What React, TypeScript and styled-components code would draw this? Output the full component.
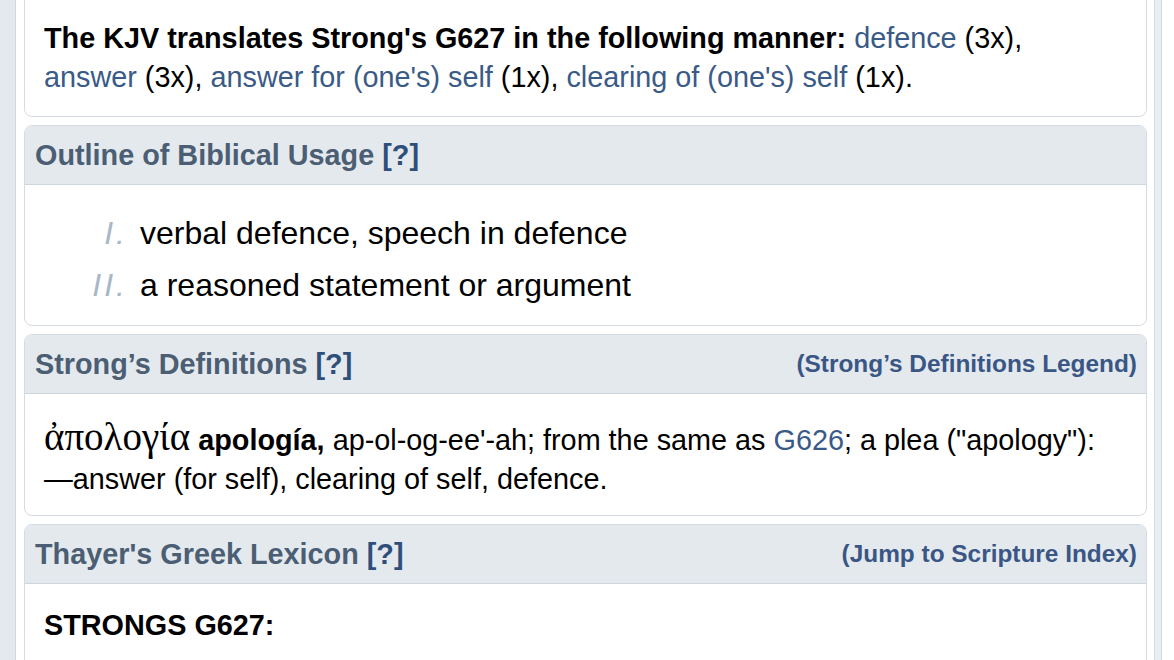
import React from "react";
import styled, { createGlobalStyle } from "styled-components";

const GlobalStyle = createGlobalStyle`
    html, body {
        margin: 0;
        padding: 0;
        background: #ffffff;
        overflow: hidden;
    }
    body {
        font-family: "Liberation Sans", Arial, sans-serif;
        color: #000;
    }
`;

const Page = styled.div`
    display: flex;
    width: 1174px;
    height: 660px;
    overflow: hidden;
`;

const LeftRail = styled.div`
    width: 15px;
    flex: none;
    background: #e4e9ef;
    border-right: 1px solid #cfd7df;
`;

const RightRail = styled.div`
    width: 6px;
    flex: none;
    margin-right: 12px;
    background: #e9eef3;
    border-left: 1px solid #d2dae2;
    border-right: 1px solid #d2dae2;
`;

const Main = styled.div`
    flex: 1;
    padding: 0 7px 0 8px;
    display: flex;
    flex-direction: column;
    gap: 8px;
`;

const Panel = styled.section<{ $top?: boolean }>`
    border: 1px solid #d4dbe3;
    border-radius: 8px;
    background: #fff;
    overflow: hidden;
    margin-top: ${p => (p.$top ? "-20px" : "0")};
    flex: none;
`;

const Header = styled.div`
    display: flex;
    align-items: center;
    justify-content: space-between;
    background: #e4e9ee;
    border-bottom: 1px solid #cdd5dd;
    padding: 13px 9px 13px 10px;
    line-height: 32px;
`;

const Title = styled.h2`
    margin: 0;
    font-size: 28.8px;
    font-weight: bold;
    color: #4b5e73;
`;

const Help = styled.a`
    color: #2f4f7b;
    text-decoration: none;
`;

const HeaderLink = styled.a`
    font-size: 24.4px;
    font-weight: bold;
    color: #3a5684;
    text-decoration: none;
`;

const Body = styled.div<{ $pt: number; $pb: number; $pr?: number }>`
    padding: ${p => p.$pt}px ${p => p.$pr ?? 19}px ${p => p.$pb}px 19px;
    font-size: 28.8px;
    line-height: 39px;
`;

const Strong = styled.b`
    font-weight: bold;
`;

const Link = styled.a`
    color: #3a5a88;
    text-decoration: none;
`;

const Greek = styled.span`
    font-family: "Liberation Serif", "DejaVu Serif", serif;
    font-size: 39px;
    line-height: 1;
`;

const NoWrap = styled.span`
    white-space: nowrap;
`;

const OutlineList = styled.ol`
    list-style: none;
    margin: 0;
    padding: 22px 0 14px 18px;
`;

const OutlineItem = styled.li`
    display: flex;
    align-items: baseline;
    gap: 15px;
    font-size: 32px;
    line-height: 52px;
`;

const Num = styled.span`
    width: 85px;
    text-align: right;
    font-style: italic;
    letter-spacing: 3px;
    margin-right: -3px;
    color: #a8b7c6;
`;

const outline = [
    { n: "I.", text: "verbal defence, speech in defence" },
    { n: "II.", text: "a reasoned statement or argument" },
];

export default function App() {
    return (
        <Page>
            <GlobalStyle />
            <LeftRail />
            <Main>
                <Panel $top>
                    <Body $pt={38} $pb={19} $pr={32}>
                        <Strong>The KJV translates Strong's G627 in the following manner:</Strong>{" "}
                        <Link href="#">defence</Link> (3x), <Link href="#">answer</Link> (3x),{" "}
                        <Link href="#">answer for (one's) self</Link> (1x),{" "}
                        <Link href="#">clearing of (one's) self</Link> (1x).
                    </Body>
                </Panel>

                <Panel>
                    <Header>
                        <Title>
                            Outline of Biblical Usage <Help href="#">[?]</Help>
                        </Title>
                    </Header>
                    <OutlineList>
                        {outline.map(o => (
                            <OutlineItem key={o.n}>
                                <Num>{o.n}</Num>
                                <span>{o.text}</span>
                            </OutlineItem>
                        ))}
                    </OutlineList>
                </Panel>

                <Panel>
                    <Header>
                        <Title>
                            Strong’s Definitions <Help href="#">[?]</Help>
                        </Title>
                        <HeaderLink href="#">(Strong’s Definitions Legend)</HeaderLink>
                    </Header>
                    <Body $pt={23} $pb={16}>
                        <Greek>ἀπολογία</Greek> <Strong>apología,</Strong> ap-ol-og-ee'-ah; from the
                        same as <Link href="#">G626</Link>; a plea ("apology"):{" "}
                        <NoWrap>—answer</NoWrap> (for self), clearing of self, defence.
                    </Body>
                </Panel>

                <Panel>
                    <Header>
                        <Title>
                            Thayer's Greek Lexicon <Help href="#">[?]</Help>
                        </Title>
                        <HeaderLink href="#">(Jump to Scripture Index)</HeaderLink>
                    </Header>
                    <Body $pt={22} $pb={40}>
                        <Strong>STRONGS G627:</Strong>
                    </Body>
                </Panel>
            </Main>
            <RightRail />
        </Page>
    );
}
